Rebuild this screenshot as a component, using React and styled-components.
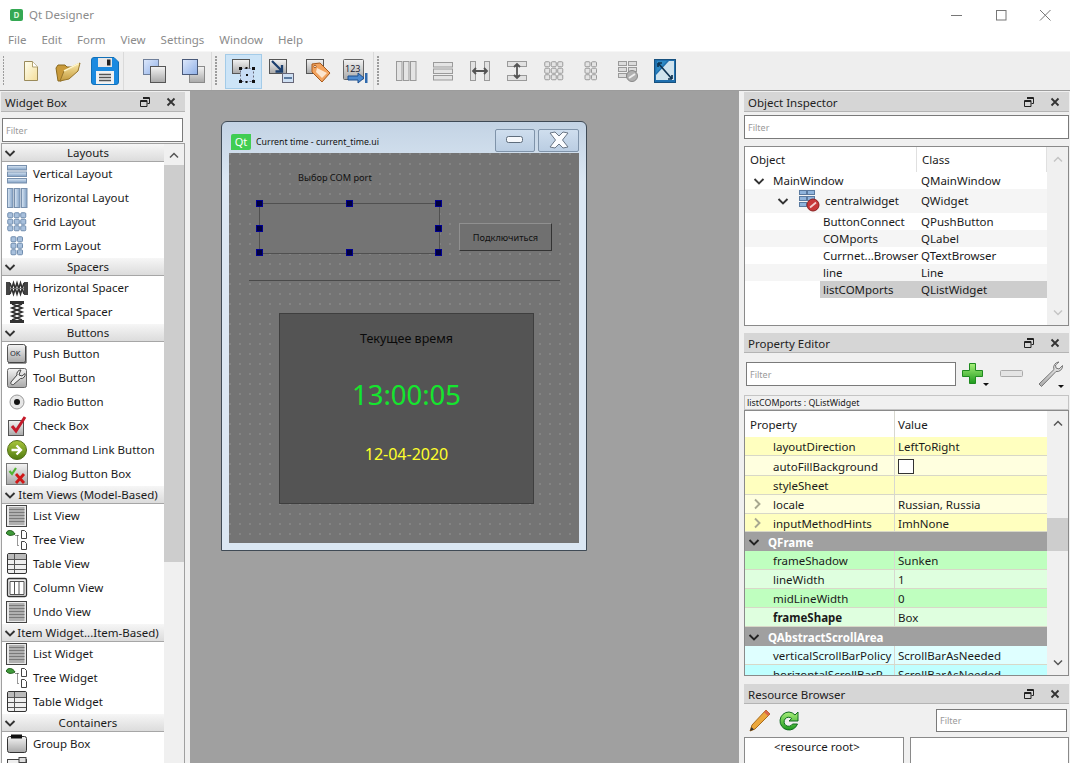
import React from 'react'
import styled, { createGlobalStyle } from 'styled-components'

const GlobalStyle = createGlobalStyle`
html, body {
    margin: 0;
    padding: 0;
    background: #f0f0f0;
    overflow: hidden;
}
body {
    font-family: "Noto Sans", "Open Sans", sans-serif;
    font-size: 11.5px;
    color: #1a1a1a;
}
* {
    box-sizing: border-box;
}
svg {
    display: block;
    flex: none;
}
`

/* ---------- icons ---------- */

const Svg = ({ w = 24, h = 24, vb, children }) => (
    <svg width={w} height={h} viewBox={vb || `0 0 ${w} ${h}`}>{children}</svg>
)

const Defs = () => (
    <HiddenDefs width="0" height="0">
        <defs>
            <linearGradient id="grayBox" x1="0" y1="0" x2="0" y2="1">
                <stop offset="0" stopColor="#f4f4f4" />
                <stop offset="1" stopColor="#a8a8a8" />
            </linearGradient>
            <linearGradient id="blueBox" x1="0" y1="0" x2="1" y2="1">
                <stop offset="0" stopColor="#dfe9fb" />
                <stop offset="1" stopColor="#8fb0e8" />
            </linearGradient>
            <linearGradient id="barBlue" x1="0" y1="0" x2="0" y2="1">
                <stop offset="0" stopColor="#dbe8f5" />
                <stop offset="1" stopColor="#7f9fc4" />
            </linearGradient>
            <linearGradient id="barBlueV" x1="0" y1="0" x2="1" y2="0">
                <stop offset="0" stopColor="#dbe8f5" />
                <stop offset="1" stopColor="#7f9fc4" />
            </linearGradient>
            <linearGradient id="folder" x1="0" y1="0" x2="0" y2="1">
                <stop offset="0" stopColor="#fbe9a8" />
                <stop offset="1" stopColor="#c49a3c" />
            </linearGradient>
            <linearGradient id="paper" x1="0" y1="0" x2="1" y2="1">
                <stop offset="0" stopColor="#fffff0" />
                <stop offset="1" stopColor="#f3dd9a" />
            </linearGradient>
            <linearGradient id="green" x1="0" y1="0" x2="0" y2="1">
                <stop offset="0" stopColor="#a8f07a" />
                <stop offset="1" stopColor="#1d9a1d" />
            </linearGradient>
            <linearGradient id="olive" x1="0" y1="0" x2="0" y2="1">
                <stop offset="0" stopColor="#a9c63c" />
                <stop offset="1" stopColor="#4f7a10" />
            </linearGradient>
        </defs>
    </HiddenDefs>
)

const FloatIcon = () => (
    <Svg w={10} h={10}>
        <path d="M3 .5h6.500v6h-2M.5 3.500h6.500v6H.5z" fill="none" stroke="#222" />
        <path d="M3 1.500h6.500M.5 4.500H7" stroke="#222" />
    </Svg>
)
const CloseIcon = () => (
    <Svg w={10} h={10}>
        <path d="M1.500 1.500l7 7M8.500 1.500l-7 7" stroke="#333" strokeWidth="1.800" />
    </Svg>
)
const Chevron = ({ open = true, color = '#333', size = 12 }) => (
    <Svg w={size} h={size} vb="0 0 12 12">
        <path d={open ? 'M1.500 4l4.500 4.500L10.500 4' : 'M4 1.500L8.500 6 4 10.500'} fill="none" stroke={color} strokeWidth="1.900" />
    </Svg>
)
const ArrowUp = ({ color = '#555' }) => (
    <Svg w={12} h={8}><path d="M2 6.500l4-4 4 4" fill="none" stroke={color} strokeWidth="1.500" /></Svg>
)
const ArrowDown = ({ color = '#555' }) => (
    <Svg w={12} h={8}><path d="M2 1.500l4 4 4-4" fill="none" stroke={color} strokeWidth="1.500" /></Svg>
)

const NewIcon = () => (
    <Svg w={18} h={24}>
        <path d="M2.500 2.500h8l5 5.500v13.500h-13z" fill="url(#paper)" stroke="#9a8a5a" />
        <path d="M10.500 2.500v5.500h5" fill="#fff" stroke="#b0a070" />
    </Svg>
)
const OpenIcon = () => (
    <Svg w={26} h={24}>
        <path d="M1 9l2-3h7l2 2h8l1 3-15 11H3z" fill="#c99a3a" stroke="#8a6a20" />
        <path d="M5 22l4-10 16-8-2 8-9 8z" fill="url(#folder)" stroke="#96742a" />
        <path d="M9 12l15-7.500" stroke="#fff5c8" strokeWidth="1.500" />
    </Svg>
)
const SaveIcon = () => (
    <Svg w={28} h={28}>
        <path d="M3 .5h20l4.500 4.500v20a2.500 2.500 0 0 1-2.500 2.500H3A2.500 2.500 0 0 1 .5 25V3A2.500 2.500 0 0 1 3 .5z" fill="#1b8ae0" stroke="#1270b8" />
        <rect x="7" y="1" width="14" height="9" fill="#e8e8e8" />
        <rect x="16" y="2.500" width="3.500" height="6" fill="#222" />
        <rect x="5" y="14" width="18" height="13" fill="#f2f2f2" />
        <path d="M8 17.500h12M8 20.500h12M8 23.500h12" stroke="#555" strokeWidth="1.300" />
    </Svg>
)
const BackIcon = () => (
    <Svg w={26} h={26}>
        <rect x="1.500" y="1.500" width="15" height="15" fill="url(#blueBox)" stroke="#6f7f9a" />
        <rect x="8.500" y="8.500" width="15" height="16" fill="url(#grayBox)" stroke="#555" />
    </Svg>
)
const FrontIcon = () => (
    <Svg w={26} h={26}>
        <rect x="8.500" y="8.500" width="15" height="16" fill="url(#grayBox)" stroke="#8a8a8a" />
        <rect x="1.500" y="1.500" width="15" height="15" fill="url(#blueBox)" stroke="#4a5a7a" />
    </Svg>
)
const WidgetEditIcon = () => (
    <Svg w={26} h={26}>
        <rect x="1.500" y="1.500" width="17" height="14" fill="url(#grayBox)" stroke="#555" />
        <rect x="9.500" y="10.500" width="13" height="13" fill="#c8dcf5" stroke="#667" strokeDasharray="2 2" />
        <path d="M8 9h3v3H8zM21 9h3v3h-3zM8 22h3v3H8zM21 22h3v3h-3zM14.500 9h2v2h-2zM14.500 23h2v2h-2zM15 16h2v2h-2z" fill="#111" />
    </Svg>
)
const SignalIcon = () => (
    <Svg w={26} h={26}>
        <rect x="1.500" y="1.500" width="17" height="14" fill="url(#grayBox)" stroke="#555" />
        <rect x="14.500" y="15.500" width="11" height="9" fill="#cfe0f3" stroke="#667" />
        <rect x="16" y="19" width="8" height="2" fill="#5a7aa0" />
        <path d="M4 3l10 10M14 7v6.500H7.500" fill="none" stroke="#1c3f6e" strokeWidth="2.300" />
    </Svg>
)
const BuddyIcon = () => (
    <Svg w={26} h={26}>
        <rect x="1.500" y="1.500" width="17" height="14" fill="url(#grayBox)" stroke="#555" />
        <path d="M7 6l8-1 10 10-8 9-10-10z" fill="#f2a35e" stroke="#a85a1c" />
        <path d="M12 10l10 5-5 5-6-6z" fill="#fbe5cf" />
        <circle cx="10" cy="8.500" r="1.200" fill="#fff" stroke="#a85a1c" />
    </Svg>
)
const TabOrderIcon = () => (
    <Svg w={26} h={26}>
        <rect x="1.500" y="1.500" width="20" height="20" rx="1" fill="url(#grayBox)" stroke="#666" />
        <TinyText x="3" y="14">123</TinyText>
        <path d="M6 18h10v-3l6 5-6 5v-3H6z" fill="#4c8ad0" stroke="#1c4f8e" />
        <rect x="23" y="15" width="2.500" height="10" fill="#2f6aae" />
    </Svg>
)

const Bars = ({ vertical, w = 22, h = 22, fill, stroke = '#7890ad' }) => {
    const items = [0, 1, 2]
    return (
        <Svg w={w} h={h}>
            {items.map(i =>
                vertical ? (
                    <rect key={i} x={1.5 + i * 7} y="1.5" width="5.500" height={h - 3} fill={fill || 'url(#barBlueV)'} stroke={stroke} />
                ) : (
                    <rect key={i} x="1.5" y={2.5 + i * 6.5} width={w - 3} height="4.500" fill={fill || 'url(#barBlue)'} stroke={stroke} />
                )
            )}
        </Svg>
    )
}
const GridDots = ({ cols = 3, rows = 3, fill = '#a8c0dc', stroke = '#6f8cae' }) => {
    const cells = []
    for (let r = 0; r < rows; r++) {
        for (let c = 0; c < cols; c++) {
            cells.push(<rect key={`${r}-${c}`} x={(22 - cols * 6.5) / 2 + c * 6.5 + 0.5} y={(22 - rows * 6.5) / 2 + r * 6.5 + 0.5} width="5" height="5" rx="1" fill={fill} stroke={stroke} />)
        }
    }
    return <Svg w={22} h={22}>{cells}</Svg>
}
const HSpacerIcon = () => (
    <Svg w={22} h={22}>
        <rect x="0" y="5" width="4" height="13" fill="#444" />
        <rect x="18" y="5" width="4" height="13" fill="#444" />
        <path d="M4 6l3.500 11L11 6l3.500 11L18 6M4 17L7.500 6 11 17l3.500-11L18 17" fill="none" stroke="#333" strokeWidth="1.600" />
        <path d="M4 11.500h14" stroke="#777" />
    </Svg>
)
const VSpacerIcon = () => (
    <Svg w={22} h={22}>
        <rect x="4" y="0" width="14" height="3" fill="#333" />
        <rect x="4" y="19" width="14" height="3" fill="#333" />
        <path d="M6 3l10 4-10 4 10 4-10 4M16 3L6 7l10 4-10 4 10 4" fill="none" stroke="#2f2f2f" strokeWidth="1.700" />
    </Svg>
)
const PushIcon = () => (
    <Svg w={22} h={22}>
        <rect x="1.500" y="1.500" width="18" height="18" rx="2" fill="url(#grayBox)" stroke="#555" />
        <path d="M2 20h18v-17" fill="none" stroke="#333" />
        <TinyText x="4" y="13" $size="7.500">OK</TinyText>
    </Svg>
)
const ToolIcon = () => (
    <Svg w={22} h={22}>
        <rect x="1.500" y="1.500" width="19" height="19" rx="2" fill="url(#grayBox)" stroke="#666" />
        <path d="M15 3a4 4 0 0 0-4 5l-6 7c-1 2 1 3 2.500 2.500l7-6a4 4 0 0 0 4.500-5L16 9l-3-1 1-3z" fill="#eee" stroke="#444" />
    </Svg>
)
const RadioIcon = () => (
    <Svg w={22} h={22}>
        <circle cx="11" cy="11" r="7" fill="#e6e6e6" stroke="#9a9a9a" />
        <circle cx="11" cy="11" r="3" fill="#111" />
    </Svg>
)
const CheckIcon = () => (
    <Svg w={22} h={22}>
        <rect x="2.500" y="5.500" width="15" height="15" fill="url(#grayBox)" stroke="#555" />
        <path d="M6 11l4 5 9-14" fill="none" stroke="#c41a2a" strokeWidth="3" />
    </Svg>
)
const CommandIcon = () => (
    <Svg w={22} h={22}>
        <circle cx="11" cy="11" r="9.500" fill="url(#olive)" stroke="#55701a" />
        <path d="M5.500 11h9M10.500 6.500l4.500 4.500-4.500 4.500" fill="none" stroke="#fff" strokeWidth="2.300" />
    </Svg>
)
const DialogIcon = () => (
    <Svg w={22} h={22}>
        <rect x="0.500" y="0.500" width="21" height="21" fill="url(#grayBox)" stroke="#777" />
        <path d="M3.500 8l2.500 3 4-6" fill="none" stroke="#52b432" strokeWidth="2.200" />
        <path d="M10 11l8 9M18 11l-8 9" stroke="#d01818" strokeWidth="2.800" />
    </Svg>
)
const ListIcon = () => (
    <Svg w={22} h={22}>
        <rect x="0.500" y="0.500" width="20" height="21" fill="#e8e8e8" stroke="#444" />
        <rect x="3" y="2" width="15.500" height="18" fill="#b0b0b0" />
        <path d="M3 4.500h15.500M3 7.500h15.500M3 10.500h15.500M3 13.500h15.500M3 16.500h15.500" stroke="#7a7a7a" />
    </Svg>
)
const TreeIcon = () => (
    <Svg w={22} h={22}>
        <path d="M0 4c2-4 7-3 9 1-3 2-7 2-9-1z" fill="#3f9a3a" stroke="#1f5a1a" />
        <path d="M9.500 6.500h4M11.500 6.500v10h2" fill="none" stroke="#333" strokeDasharray="1 1" />
        <path d="M15.500 1.500h3l2 2v6h-5zM15.500 12.500h3l2 2v6h-5z" fill="#fff" stroke="#444" />
    </Svg>
)
const TableIcon = () => (
    <Svg w={22} h={22}>
        <rect x="1.500" y="0.500" width="19" height="20" rx="1.500" fill="#efefef" stroke="#333" />
        <rect x="2" y="1" width="18" height="5" fill="#bbb" />
        <path d="M2 6.500h18M2 11.500h18M2 16.500h18M8.500 1v19" stroke="#555" />
    </Svg>
)
const ColumnIcon = () => (
    <Svg w={22} h={22}>
        <rect x="1.500" y="1.500" width="19" height="18" rx="1.500" fill="#f0f0f0" stroke="#333" strokeWidth="1.300" />
        <path d="M4 4.500h14v13H4zM8.500 4.500v13M13 4.500v13" fill="#fff" stroke="#555" />
    </Svg>
)
const GroupIcon = () => (
    <Svg w={22} h={22}>
        <rect x="1.500" y="3.500" width="19" height="16" rx="2" fill="url(#grayBox)" stroke="#333" />
        <rect x="5" y="1.500" width="11" height="4" fill="#111" />
    </Svg>
)
const TabWidgetIcon = () => (
    <Svg w={22} h={22}>
        <rect x="1.500" y="2.500" width="19" height="19" fill="#eee" stroke="#444" />
        <rect x="13" y="0.500" width="7" height="5" fill="#ddd" stroke="#444" />
    </Svg>
)
const BreakIcon = () => (
    <Svg w={22} h={22}>
        <g fill="#dcdcdc" stroke="#9a9a9a">
            <rect x="1.500" y="1.500" width="8" height="4" />
            <rect x="11.500" y="1.500" width="8" height="4" />
            <rect x="1.500" y="7.500" width="8" height="4" />
            <rect x="11.500" y="7.500" width="8" height="4" />
            <rect x="1.500" y="13.500" width="8" height="4" />
        </g>
        <circle cx="15" cy="16" r="5.500" fill="#b0b0b0" stroke="#888" />
        <path d="M12 18l6-4" stroke="#eee" strokeWidth="2" />
    </Svg>
)
const AdjustIcon = () => (
    <Svg w={22} h={24}>
        <rect x="0.500" y="0.500" width="21" height="23" fill="#1f6fae" stroke="#17517f" />
        <path d="M2 16L15 2h5v19H2z" fill="#cfe3ee" />
        <path d="M3 2h10L2 14z" fill="#2c89c4" />
        <path d="M4 4l14 16M4 4h4M4 4v4M18 20h-4M18 20v-4" fill="none" stroke="#0e3352" strokeWidth="1.700" />
    </Svg>
)
const HSplitIcon = () => (
    <Svg w={22} h={22}>
        <rect x="1.500" y="1.500" width="5" height="19" fill="#e2e2e2" stroke="#9a9a9a" />
        <rect x="15.500" y="1.500" width="5" height="19" fill="#e2e2e2" stroke="#9a9a9a" />
        <path d="M4 11h14M7 8l-3 3 3 3M15 8l3 3-3 3" fill="none" stroke="#555" strokeWidth="1.800" />
    </Svg>
)
const VSplitIcon = () => (
    <Svg w={22} h={22}>
        <rect x="1.500" y="1.500" width="19" height="5" fill="#e2e2e2" stroke="#9a9a9a" />
        <rect x="1.500" y="15.500" width="19" height="5" fill="#e2e2e2" stroke="#9a9a9a" />
        <path d="M11 4v14M8 7l3-3 3 3M8 15l3 3 3-3" fill="none" stroke="#555" strokeWidth="1.800" />
    </Svg>
)
const PlusIcon = () => (
    <Svg w={28} h={26}>
        <path d="M8.500 1.500h6v7h7v6h-7v7h-6v-7h-7v-6h7z" fill="url(#green)" stroke="#1f8a1f" />
        <path d="M22 21h6l-3 3z" fill="#111" />
    </Svg>
)
const MinusIcon = () => (
    <Svg w={24} h={8}>
        <rect x="0.500" y="0.500" width="22" height="6" rx="1" fill="#e4e4e4" stroke="#aaa" />
    </Svg>
)
const WrenchIcon = () => (
    <Svg w={28} h={28}>
        <path d="M22 1a5.500 5.500 0 0 0-5 7.500L2 23l2.500 2.500L19 10.500a5.500 5.500 0 0 0 6.500-6L22 8l-3-1-.5-3z" fill="url(#grayBox)" stroke="#777" />
        <path d="M21 24h6l-3 3z" fill="#111" />
    </Svg>
)
const PencilIcon = () => (
    <Svg w={24} h={26}>
        <path d="M18 2l4 4L7 21l-5 2 2-6z" fill="#eba73c" stroke="#a86a1a" />
        <path d="M18 2l4 4-2 2-4-4z" fill="#d9654a" />
        <path d="M2 23l1.500-4 2.500 2.500z" fill="#333" />
    </Svg>
)
const ReloadIcon = () => (
    <Svg w={24} h={24}>
        <path d="M12 3a9 9 0 1 0 8.500 12h-5a4.500 4.500 0 1 1-.8-5.500L12 12h9V3l-3 3a9 9 0 0 0-6-3z" fill="url(#green)" stroke="#106a20" />
    </Svg>
)
const CentralIcon = () => (
    <Svg w={22} h={22}>
        <g fill="#8fb4dc" stroke="#5a7aa0">
            <rect x="1.500" y="0.500" width="7" height="4" />
            <rect x="9.500" y="0.500" width="7" height="4" />
            <rect x="1.500" y="6.500" width="7" height="4" />
            <rect x="9.500" y="6.500" width="7" height="4" />
            <rect x="1.500" y="12.500" width="7" height="4" />
        </g>
        <circle cx="15" cy="15" r="6" fill="#c8383a" stroke="#8a2020" />
        <path d="M12 17.500l6-5" stroke="#f3d0d0" strokeWidth="1.800" />
    </Svg>
)

const MinGlyph = () => (
    <Svg w={18} h={8}>
        <rect x="0.500" y="0.500" width="16" height="6" rx="2" fill="#f6f8fb" stroke="#5f6d7c" />
    </Svg>
)
const CloseGlyph = () => (
    <Svg w={22} h={18}>
        <path d="M2 2l5-1 4 4 4-4 5 1-5.500 7 5.500 7-5 1-4-4-4 4-5-1 5.500-7z" fill="#fbfcfe" stroke="#6a7685" />
    </Svg>
)

/* ---------- data ---------- */

const widgetGroups = [
    { name: 'Layouts', items: [
        ['Vertical Layout', <Bars key="a" />],
        ['Horizontal Layout', <Bars key="a" vertical />],
        ['Grid Layout', <GridDots key="a" />],
        ['Form Layout', <GridDots key="a" cols={2} />],
    ] },
    { name: 'Spacers', items: [
        ['Horizontal Spacer', <HSpacerIcon key="a" />],
        ['Vertical Spacer', <VSpacerIcon key="a" />],
    ] },
    { name: 'Buttons', items: [
        ['Push Button', <PushIcon key="a" />],
        ['Tool Button', <ToolIcon key="a" />],
        ['Radio Button', <RadioIcon key="a" />],
        ['Check Box', <CheckIcon key="a" />],
        ['Command Link Button', <CommandIcon key="a" />],
        ['Dialog Button Box', <DialogIcon key="a" />],
    ] },
    { name: 'Item Views (Model-Based)', items: [
        ['List View', <ListIcon key="a" />],
        ['Tree View', <TreeIcon key="a" />],
        ['Table View', <TableIcon key="a" />],
        ['Column View', <ColumnIcon key="a" />],
        ['Undo View', <ListIcon key="a" />],
    ] },
    { name: 'Item Widget...Item-Based)', items: [
        ['List Widget', <ListIcon key="a" />],
        ['Tree Widget', <TreeIcon key="a" />],
        ['Table Widget', <TableIcon key="a" />],
    ] },
    { name: 'Containers', items: [
        ['Group Box', <GroupIcon key="a" />],
        // the next row is cut by the window, only the top of its icon shows
        ['', <TabWidgetIcon key="a" />],
    ] },
]

const treeRows = [
    { name: 'ButtonConnect', cls: 'QPushButton' },
    { name: 'COMports', cls: 'QLabel', alt: true },
    { name: 'Currnet...Browser', cls: 'QTextBrowser' },
    { name: 'line', cls: 'Line', alt: true },
    { name: 'listCOMports', cls: 'QListWidget', selected: true },
]

const palette = {
    yellow: ['#ffffbf', '#ffffdf'],
    green: ['#bfffbf', '#dfffdf'],
    cyan: ['#dfffff', '#bfffff'],
}

const propRows = [
    { name: 'layoutDirection', value: 'LeftToRight', bg: palette.yellow[0] },
    { name: 'autoFillBackground', box: true, bg: palette.yellow[1], tall: true },
    { name: 'styleSheet', value: '', bg: palette.yellow[0] },
    { name: 'locale', value: 'Russian, Russia', bg: palette.yellow[1], more: true },
    { name: 'inputMethodHints', value: 'ImhNone', bg: palette.yellow[0], more: true, short: true },
    { group: 'QFrame' },
    { name: 'frameShadow', value: 'Sunken', bg: palette.green[0] },
    { name: 'lineWidth', value: '1', bg: palette.green[1] },
    { name: 'midLineWidth', value: '0', bg: palette.green[0] },
    { name: 'frameShape', value: 'Box', bg: palette.green[1], bold: true },
    { group: 'QAbstractScrollArea' },
    { name: 'verticalScrollBarPolicy', value: 'ScrollBarAsNeeded', bg: palette.cyan[0] },
    { name: 'horizontalScrollBarP', value: 'ScrollBarAsNeeded', bg: palette.cyan[1] },
]

const menus = ['File', 'Edit', 'Form', 'View', 'Settings', 'Window', 'Help']

/* ---------- page ---------- */

function DockTitle({ children }) {
    return (
        <TitleRow>
            <span>{children}</span>
            <TitleButtons>
                <FloatIcon />
                <CloseIcon />
            </TitleButtons>
        </TitleRow>
    )
}

function App() {
    return (
        <AppWindow>
            <GlobalStyle />
            <Defs />
            <TitleBar>
                <AppIcon>D</AppIcon>
                <AppName>Qt Designer</AppName>
                <WindowControls>
                    <Svg w={12} h={12}><path d="M0 6.500h11" stroke="#777" /></Svg>
                    <Svg w={12} h={12}><rect x="1.500" y="1.500" width="9.500" height="9.500" fill="none" stroke="#777" /></Svg>
                    <Svg w={12} h={12}><path d="M1 1l10.500 10.500M11.500 1L1 11.500" stroke="#777" /></Svg>
                </WindowControls>
            </TitleBar>
            <MenuBar>
                {menus.map(m => <MenuItem key={m}>{m}</MenuItem>)}
            </MenuBar>
            <ToolBar>
                <ToolGroup $width={124}>
                    <Grip />
                    <ToolButton $w={37}><NewIcon /></ToolButton>
                    <ToolButton $w={37}><OpenIcon /></ToolButton>
                    <ToolButton $w={37}><SaveIcon /></ToolButton>
                </ToolGroup>
                <ToolGroup $width={88}>
                    <Grip />
                    <ToolButton $w={39}><BackIcon /></ToolButton>
                    <ToolButton $w={39}><FrontIcon /></ToolButton>
                </ToolGroup>
                <ToolGroup $width={162}>
                    <Grip />
                    <ToolButton $w={37} $active><WidgetEditIcon /></ToolButton>
                    <ToolButton $w={37}><SignalIcon /></ToolButton>
                    <ToolButton $w={37}><BuddyIcon /></ToolButton>
                    <ToolButton $w={37}><TabOrderIcon /></ToolButton>
                </ToolGroup>
                <ToolGroup $last>
                    <Grip />
                    <ToolButton $w={37}><Bars vertical fill="#e4e4e4" stroke="#9a9a9a" /></ToolButton>
                    <ToolButton $w={37}><Bars fill="#e4e4e4" stroke="#9a9a9a" /></ToolButton>
                    <ToolButton $w={37}><HSplitIcon /></ToolButton>
                    <ToolButton $w={37}><VSplitIcon /></ToolButton>
                    <ToolButton $w={37}><GridDots fill="#e4e4e4" stroke="#9a9a9a" /></ToolButton>
                    <ToolButton $w={37}><GridDots cols={2} fill="#e4e4e4" stroke="#9a9a9a" /></ToolButton>
                    <ToolButton $w={37}><BreakIcon /></ToolButton>
                    <ToolButton $w={37}><AdjustIcon /></ToolButton>
                </ToolGroup>
            </ToolBar>
            <Workspace>
                <LeftDock>
                    <DockTitle>Widget Box</DockTitle>
                    <BoxFilter placeholder="Filter" readOnly />
                    <WidgetList>
                        <WidgetColumn>
                            {widgetGroups.map(g => (
                                <div key={g.name}>
                                    <GroupHeader>
                                        <Chevron />
                                        <GroupName>{g.name}</GroupName>
                                    </GroupHeader>
                                    {g.items.map(([label, icon]) => (
                                        <WidgetRow key={label}>
                                            <IconSlot>{icon}</IconSlot>
                                            <WidgetLabel>{label}</WidgetLabel>
                                        </WidgetRow>
                                    ))}
                                </div>
                            ))}
                        </WidgetColumn>
                        <ScrollBar>
                            <ScrollArrow $h={21}><ArrowUp /></ScrollArrow>
                            <LeftThumb />
                        </ScrollBar>
                    </WidgetList>
                </LeftDock>

                <Canvas>
                    <FormWindow>
                        <FormTitle>
                            <QtBadge>Qt</QtBadge>
                            <FormName>Current time - current_time.ui</FormName>
                            <FormButton $w={40}><MinGlyph /></FormButton>
                            <FormButton $w={41}><CloseGlyph /></FormButton>
                        </FormTitle>
                        <FormBody>
                            <PortLabel>Выбор COM port</PortLabel>
                            <PortList>
                                <Handle $x={0} $y={0} />
                                <Handle $x={50} $y={0} />
                                <Handle $x={100} $y={0} />
                                <Handle $x={0} $y={50} />
                                <Handle $x={100} $y={50} />
                                <Handle $x={0} $y={100} />
                                <Handle $x={50} $y={100} />
                                <Handle $x={100} $y={100} />
                            </PortList>
                            <ConnectButton>Подключиться</ConnectButton>
                            <FormLine />
                            <ClockPanel>
                                <ClockCaption>Текущее время</ClockCaption>
                                <ClockTime>13:00:05</ClockTime>
                                <ClockDate>12-04-2020</ClockDate>
                            </ClockPanel>
                        </FormBody>
                    </FormWindow>
                </Canvas>

                <RightDock>
                    <DockTitle>Object Inspector</DockTitle>
                    <InspectorFilter placeholder="Filter" readOnly />
                    <InspectorTree>
                        <TreeBody>
                            <TreeHead>
                                <ObjectCol>Object</ObjectCol>
                                <ClassCol>Class</ClassCol>
                            </TreeHead>
                            <TreeRow>
                                <ChevronSlot $left={8}><Chevron /></ChevronSlot>
                                <TreeName $left={28}>MainWindow</TreeName>
                                <TreeClass>QMainWindow</TreeClass>
                            </TreeRow>
                            <TreeRow $alt $tall>
                                <ChevronSlot $left={32}><Chevron /></ChevronSlot>
                                <CentralSlot><CentralIcon /></CentralSlot>
                                <TreeName $left={80}>centralwidget</TreeName>
                                <TreeClass>QWidget</TreeClass>
                            </TreeRow>
                            {treeRows.map(r => (
                                <TreeRow key={r.name} $alt={r.alt} $selected={r.selected}>
                                    <TreeName $left={78}>{r.name}</TreeName>
                                    <TreeClass>{r.cls}</TreeClass>
                                </TreeRow>
                            ))}
                        </TreeBody>
                        <SideScroll>
                            <ScrollArrow $h={24}><ArrowUp color="#c4c4c4" /></ScrollArrow>
                            <Spacer />
                            <ScrollArrow $h={24}><ArrowDown color="#c4c4c4" /></ScrollArrow>
                        </SideScroll>
                    </InspectorTree>

                    <PropertyTitle><DockTitle>Property Editor</DockTitle></PropertyTitle>
                    <PropertyTools>
                        <PropertyFilter placeholder="Filter" readOnly />
                        <PlusSlot><PlusIcon /></PlusSlot>
                        <MinusSlot><MinusIcon /></MinusSlot>
                        <WrenchSlot><WrenchIcon /></WrenchSlot>
                    </PropertyTools>
                    <ObjectLabel>listCOMports : QListWidget</ObjectLabel>
                    <PropertyTable>
                        <TableBody>
                            <PropHead>
                                <PropCell>Property</PropCell>
                                <ValueCell>Value</ValueCell>
                            </PropHead>
                            {propRows.map(r => r.group ? (
                                <GroupRow key={r.group}>
                                    <Chevron color="#222" />
                                    <span>{r.group}</span>
                                </GroupRow>
                            ) : (
                                <PropRow key={r.name} $bg={r.bg} $tall={r.tall} $short={r.short}>
                                    <PropCell $bold={r.bold} $indent>
                                        {r.more && <MoreSlot><Chevron open={false} color="#a8a890" /></MoreSlot>}
                                        {r.name}
                                    </PropCell>
                                    <ValueCell>{r.box ? <CheckBoxCell /> : r.value}</ValueCell>
                                </PropRow>
                            ))}
                        </TableBody>
                        <SideScroll>
                            <ScrollArrow $h={24}><ArrowUp /></ScrollArrow>
                            <PropThumb />
                            <Spacer />
                            <ScrollArrow $h={24}><ArrowDown /></ScrollArrow>
                        </SideScroll>
                    </PropertyTable>

                    <ResourceTitle><DockTitle>Resource Browser</DockTitle></ResourceTitle>
                    <ResourceTools>
                        <PencilIcon />
                        <ReloadIcon />
                        <ResourceFilter placeholder="Filter" readOnly />
                    </ResourceTools>
                    <ResourcePanes>
                        <ResourceTree>&lt;resource root&gt;</ResourceTree>
                        <ResourceView />
                    </ResourcePanes>
                </RightDock>
            </Workspace>
        </AppWindow>
    )
}

/* ---------- styles ---------- */

const HiddenDefs = styled.svg`
position: absolute;
width: 0;
height: 0;
`

const TinyText = styled.text`
font-family: "Noto Sans", sans-serif;
font-size: ${p => p.$size || 9}px;
fill: #223;
`

const AppWindow = styled.div`
width: 1070px;
height: 763px;
display: flex;
flex-direction: column;
overflow: hidden;
background: #f0f0f0;
`

const TitleBar = styled.div`
height: 30px;
background: #fff;
display: flex;
align-items: center;
padding-left: 10px;
color: #8b8b8b;
`

const AppIcon = styled.div`
width: 13px;
height: 12px;
border-radius: 2px;
background: #34a853;
color: #d8f5d8;
font-size: 8px;
font-weight: 700;
line-height: 12px;
text-align: center;
margin-top: -1px;
`

const AppName = styled.div`
margin-left: 6px;
font-size: 11.5px;
margin-top: -1px;
`

const WindowControls = styled.div`
margin-left: auto;
display: flex;
gap: 32px;
padding-right: 19px;
margin-top: -1px;
`

const MenuBar = styled.div`
height: 21px;
background: #fff;
display: flex;
padding-left: 8px;
gap: 15px;
color: #8b8b8b;
font-size: 11.5px;
line-height: 20px;
`

const MenuItem = styled.div``

const ToolBar = styled.div`
height: 40px;
background: #eeeeee;
border-top: 1px solid #f6f6f6;
border-bottom: 1px solid #9c9c9c;
display: flex;
`

const ToolGroup = styled.div`
width: ${p => (p.$last ? 'auto' : `${p.$width}px`)};
flex: ${p => (p.$last ? 1 : 'none')};
display: flex;
align-items: center;
padding-left: 3px;
border-right: ${p => (p.$last ? 'none' : '1px solid #dadada')};
`

const Grip = styled.div`
width: 2px;
height: 30px;
margin-right: 8px;
background-image: radial-gradient(circle at 1px 1px, #9c9c9c 0.8px, transparent 1px);
background-size: 2px 3px;
`

const ToolButton = styled.div`
width: ${p => p.$w}px;
height: 35px;
flex: none;
display: flex;
align-items: center;
justify-content: center;
background: ${p => (p.$active ? '#cce4f7' : 'transparent')};
border: 1px solid ${p => (p.$active ? '#a3cbe8' : 'transparent')};
`

const Workspace = styled.div`
flex: 1;
display: flex;
min-height: 0;
`

const LeftDock = styled.div`
width: 190px;
flex: none;
padding: 1px 0 0 1px;
display: flex;
flex-direction: column;
`

const TitleRow = styled.div`
height: 20px;
flex: none;
width: 184px;
display: flex;
align-items: center;
justify-content: space-between;
padding: 1px 9px 0 4px;
background: #d6d6d6;
border-bottom: 1px solid #b4b4b4;
font-size: 11.5px;
color: #222;
`

const TitleButtons = styled.div`
display: flex;
gap: 16px;
align-items: center;
`

const BaseFilter = styled.input`
display: block;
background: #fff;
border: 1px solid #7a7a7a;
font-family: "Noto Sans", sans-serif;
font-size: 9px;
padding: 0 3px;
outline: none;
&::placeholder {
    color: #9a9a9a;
    opacity: 1;
}
`

const BoxFilter = styled(BaseFilter)`
width: 181px;
height: 24px;
margin: 6px 0 0 1px;
flex: none;
`

const WidgetList = styled.div`
margin-top: 1px;
width: 184px;
flex: 1;
min-height: 0;
display: flex;
background: #fff;
border: 1px solid #a0a0a0;
border-bottom: none;
overflow: hidden;
`

const WidgetColumn = styled.div`
width: 162px;
flex: none;
`

const GroupHeader = styled.div`
height: 18px;
display: flex;
align-items: center;
padding-left: 2px;
background: linear-gradient(#f6f6f6, #dcdcdc);
border-top: 1px solid #a6a6a6;
border-bottom: 1px solid #a6a6a6;
font-size: 11.5px;
&:first-child {
    border-top: none;
}
`

const GroupName = styled.div`
flex: 1;
text-align: center;
white-space: nowrap;
padding-right: 4px;
`

const WidgetRow = styled.div`
height: 24px;
display: flex;
align-items: center;
font-size: 11.5px;
white-space: nowrap;
padding-left: 4px;
`

const WidgetLabel = styled.div`
margin-top: -1px;
`

const IconSlot = styled.div`
width: 27px;
flex: none;
`

const ScrollBar = styled.div`
flex: 1;
background: #f0f0f0;
display: flex;
flex-direction: column;
`

const ScrollArrow = styled.div`
height: ${p => p.$h}px;
flex: none;
display: flex;
align-items: center;
justify-content: center;
`

const LeftThumb = styled.div`
height: 397px;
background: #cdcdcd;
`

const Canvas = styled.div`
width: 549px;
flex: none;
background: #a0a0a0;
position: relative;
`

const FormWindow = styled.div`
position: absolute;
left: 31px;
top: 30px;
width: 366px;
height: 430px;
border: 1px solid #3f4a55;
border-radius: 6px 6px 0 0;
background: linear-gradient(#c3d3e4, #dbe7f3 60px);
padding: 5px 7px 7px;
display: flex;
flex-direction: column;
`

const FormTitle = styled.div`
height: 26px;
flex: none;
display: flex;
align-items: center;
gap: 3px;
padding-left: 2px;
`

const QtBadge = styled.div`
width: 20px;
height: 16px;
background: #41cd52;
color: #fff;
font-size: 11px;
line-height: 15px;
text-align: center;
border-radius: 2px 0 2px 0;
margin-top: 3px;
`

const FormName = styled.div`
flex: 1;
margin: 3px 0 0 2px;
font-size: 8.8px;
color: #111;
white-space: nowrap;
`

const FormButton = styled.div`
width: ${p => p.$w}px;
height: 23px;
display: flex;
align-items: center;
justify-content: center;
background: linear-gradient(#cfdeee, #bacde2);
border: 1px solid #7f93a9;
border-radius: 2px;
`

const FormBody = styled.div`
position: relative;
flex: 1;
background-color: #747474;
background-image: radial-gradient(circle at 1px 1px, #8c8c8c 0.6px, transparent 0.9px);
background-size: 10px 10px;
`

const PortLabel = styled.div`
position: absolute;
left: 69px;
top: 18px;
font-size: 9.2px;
color: #111;
white-space: nowrap;
`

const PortList = styled.div`
position: absolute;
left: 30px;
top: 50px;
width: 181px;
height: 51px;
background: #747474;
border: 1px solid #505050;
`

const Handle = styled.div`
position: absolute;
left: ${p => p.$x}%;
top: ${p => p.$y}%;
width: 7px;
height: 7px;
margin: -4px 0 0 -4px;
background: #000040;
border: 1px solid #000090;
`

const ConnectButton = styled.div`
position: absolute;
left: 230px;
top: 70px;
width: 93px;
height: 28px;
background: #707070;
border: 1px solid;
border-color: #909090 #333 #333 #909090;
font-size: 9.2px;
color: #111;
text-align: center;
line-height: 28px;
`

const FormLine = styled.div`
position: absolute;
left: 20px;
top: 127px;
width: 311px;
height: 1px;
background: #4a4a4a;
`

const ClockPanel = styled.div`
position: absolute;
left: 50px;
top: 160px;
width: 255px;
height: 191px;
background: #545454;
border: 1px solid #3e3e3e;
display: flex;
flex-direction: column;
align-items: center;
`

const ClockCaption = styled.div`
margin-top: 16px;
height: 18px;
line-height: 18px;
font-size: 12.5px;
color: #0a0a0a;
`

const ClockTime = styled.div`
margin-top: 28px;
height: 38px;
line-height: 38px;
font-size: 27.500px;
color: #14e62e;
`

const ClockDate = styled.div`
margin-top: 29px;
height: 22px;
line-height: 22px;
font-size: 16px;
color: #ffff2a;
`

const RightDock = styled.div`
flex: 1;
min-width: 0;
padding: 1px 1px 0 5px;
display: flex;
flex-direction: column;
& ${TitleRow} {
    width: 100%;
}
`

const InspectorFilter = styled(BaseFilter)`
width: 100%;
height: 24px;
margin-top: 3px;
flex: none;
`

const InspectorTree = styled.div`
height: 180px;
margin-top: 7px;
flex: none;
display: flex;
background: #fff;
border: 1px solid #8a8a8a;
`

const TreeBody = styled.div`
width: 302px;
flex: none;
`

const TreeHead = styled.div`
height: 25px;
display: flex;
line-height: 25px;
font-size: 11.5px;
`

const ObjectCol = styled.div`
width: 172px;
padding-left: 5px;
border-right: 1px solid #e0e0e0;
`

const ClassCol = styled.div`
flex: 1;
padding-left: 5px;
border-right: 1px solid #e0e0e0;
`

const TreeRow = styled.div`
position: relative;
height: ${p => (p.$tall ? 24 : 17)}px;
line-height: ${p => (p.$tall ? 24 : 17)}px;
font-size: 11.5px;
white-space: nowrap;
background: ${p => (p.$alt ? '#f5f5f5' : '#fff')};
${p => p.$selected && 'background: linear-gradient(90deg, #fff 75px, #cdcdcd 75px);'}
`

const ChevronSlot = styled.div`
position: absolute;
left: ${p => p.$left}px;
top: 50%;
margin-top: -6px;
`

const CentralSlot = styled.div`
position: absolute;
left: 53px;
top: 1px;
`

const TreeName = styled.div`
position: absolute;
left: ${p => p.$left}px;
top: 0;
`

const TreeClass = styled.div`
position: absolute;
left: 176px;
top: 0;
`

const SideScroll = styled.div`
flex: 1;
display: flex;
flex-direction: column;
background: #f0f0f0;
`

const Spacer = styled.div`
flex: 1;
`

const PropertyTitle = styled.div`
margin-top: 7px;
`

const PropertyTools = styled.div`
height: 42px;
flex: none;
display: flex;
align-items: center;
`

const PropertyFilter = styled(BaseFilter)`
width: 210px;
height: 24px;
margin-left: 2px;
`

const PlusSlot = styled.div`
margin: 2px 0 0 5px;
`

const MinusSlot = styled.div`
margin: 0 0 0 11px;
`

const WrenchSlot = styled.div`
margin: 2px 0 0 13px;
`

const ObjectLabel = styled.div`
height: 15px;
flex: none;
border: 1px solid #c4c4c4;
font-size: 8.9px;
line-height: 13px;
padding-left: 2px;
white-space: nowrap;
`

const PropertyTable = styled.div`
height: 266px;
flex: none;
display: flex;
background: #fff;
border: 1px solid #8a8a8a;
overflow: hidden;
`

const TableBody = styled.div`
width: 302px;
flex: none;
`

const PropHead = styled.div`
height: 26px;
display: flex;
line-height: 26px;
background: #fff;
`

const PropRow = styled.div`
height: ${p => (p.$tall ? 20 : p.$short ? 18 : 19)}px;
display: flex;
align-items: center;
background: ${p => p.$bg};
border-bottom: 1px solid #d8d8c8;
`

const PropCell = styled.div`
position: relative;
width: 150px;
flex: none;
height: 100%;
display: flex;
align-items: center;
padding: 1px 0 0 ${p => (p.$indent ? 28 : 5)}px;
border-right: 1px solid #d8d8d0;
font-weight: ${p => (p.$bold ? 700 : 400)};
white-space: nowrap;
overflow: hidden;
`

const MoreSlot = styled.div`
position: absolute;
left: 6px;
top: 3px;
`

const ValueCell = styled.div`
flex: 1;
height: 100%;
display: flex;
align-items: center;
padding: 1px 0 0 3px;
white-space: nowrap;
`

const CheckBoxCell = styled.div`
width: 16px;
height: 15px;
background: #fff;
border: 1px solid #333;
`

const GroupRow = styled.div`
height: 19px;
display: flex;
align-items: center;
gap: 8px;
padding: 1px 0 0 3px;
background: #a0a0a0;
color: #fff;
font-weight: 700;
`

const PropThumb = styled.div`
height: 33px;
margin-top: 83px;
background: #cdcdcd;
`

const ResourceTitle = styled.div`
margin-top: 8px;
`

const ResourceTools = styled.div`
height: 33px;
flex: none;
display: flex;
align-items: center;
gap: 5px;
padding-left: 4px;
`

const ResourceFilter = styled(BaseFilter)`
width: 131px;
height: 23px;
margin-left: auto;
margin-right: 2px;
`

const ResourcePanes = styled.div`
flex: 1;
display: flex;
gap: 6px;
`

const ResourceTree = styled.div`
width: 160px;
background: #fff;
border: 1px solid #8a8a8a;
border-bottom: none;
padding-left: 29px;
line-height: 18px;
`

const ResourceView = styled.div`
flex: 1;
background: #fff;
border: 1px solid #8a8a8a;
border-bottom: none;
`

export default App
